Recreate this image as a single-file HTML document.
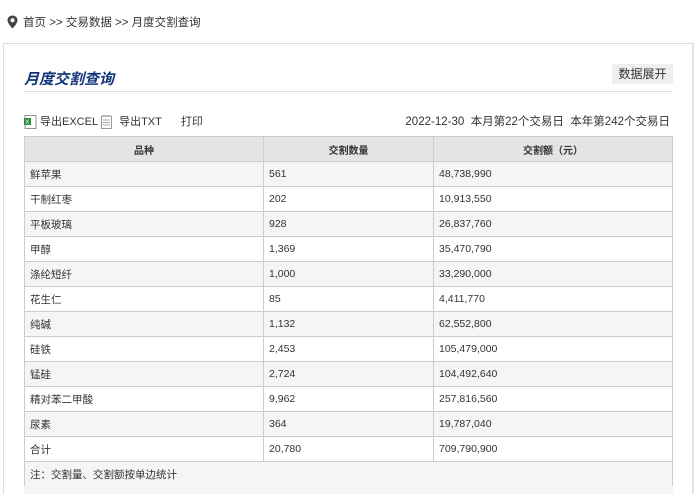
<!DOCTYPE html>
<html><head><meta charset="utf-8"><style>
*{margin:0;padding:0;box-sizing:border-box}
html,body{width:699px;height:494px;overflow:hidden}
body{background:#fff;font-family:"Liberation Sans","Noto Sans CJK SC",sans-serif;font-size:12px;color:#333;position:relative}
.crumb{position:absolute;left:7px;top:14px;font-size:11.5px;color:#333;display:flex;align-items:center}
.box{position:absolute;left:3px;top:43px;width:691px;height:460px;border:1px solid #ddd;border-right:2px solid #e2e2e2}
.title{position:absolute;left:24px;top:68px;font-size:15px;font-weight:bold;font-style:italic;color:#12357a}
.hr{position:absolute;left:24px;top:91px;width:649px;height:1px;background:#ddd}
.btn{position:absolute;left:612px;top:64px;width:61px;height:20px;background:#efefef;text-align:center;line-height:20px;color:#333}
.tools{position:absolute;left:24px;top:114px;display:flex;align-items:center;line-height:16px;font-size:11px}
.date{position:absolute;right:29px;top:114px;line-height:16px;font-size:11.5px}
table{position:absolute;left:24px;top:136px;width:649px;border-collapse:collapse}
td,th{border:1px solid #ccc;height:25px;padding:0 5px;font-size:10.5px;font-weight:normal;text-align:left}
th{background:#e4e4e4;text-align:center;font-size:10px;font-weight:bold}
tr.g td{background:#f5f5f4}
.foot{position:absolute;left:24px;top:486px;width:649px;height:8px;background:#f4f4f4}
</style></head><body>
<div class="crumb"><svg width="11" height="14" viewBox="0 0 11 14" style="margin-right:5px"><path d="M5.5 0.5C2.7 0.5 0.5 2.7 0.5 5.4 0.5 8.6 5.5 13.5 5.5 13.5S10.5 8.6 10.5 5.4C10.5 2.7 8.3 0.5 5.5 0.5Z" fill="#444"/><circle cx="5.5" cy="5.2" r="2" fill="#fff"/></svg>首页 &gt;&gt; 交易数据 &gt;&gt; 月度交割查询</div>
<div class="box"></div>
<div class="title">月度交割查询</div>
<div class="btn">数据展开</div>
<div class="hr"></div>
<div class="tools"><svg width="13" height="14" viewBox="0 0 13 14"><rect x="1" y="0.5" width="11" height="13" fill="#fff" stroke="#8a9a8a"/><rect x="0" y="3" width="7" height="7" fill="#2e8b3a"/><text x="1.2" y="9" font-size="6" fill="#fff" font-family="Liberation Sans">X</text></svg><span style="margin-left:3px">导出EXCEL</span><svg width="12" height="14" viewBox="0 0 12 14" style="margin-left:3px"><rect x="0.5" y="1.5" width="10" height="12" fill="#fff" stroke="#999"/><path d="M2 5h7M2 7.5h7M2 10h7" stroke="#aaa"/><rect x="1" y="0" width="9" height="2" fill="#bbb"/></svg><span style="margin-left:6px">导出TXT</span><span style="margin-left:19px">打印</span></div>
<div class="date">2022-12-30&nbsp; 本月第22个交易日&nbsp; 本年第242个交易日</div>
<table>
<tr><th style="width:239px">品种</th><th style="width:170px">交割数量</th><th>交割额（元）</th></tr>
<tr class="g"><td>鲜苹果</td><td>561</td><td>48,738,990</td></tr>
<tr><td>干制红枣</td><td>202</td><td>10,913,550</td></tr>
<tr class="g"><td>平板玻璃</td><td>928</td><td>26,837,760</td></tr>
<tr><td>甲醇</td><td>1,369</td><td>35,470,790</td></tr>
<tr class="g"><td>涤纶短纤</td><td>1,000</td><td>33,290,000</td></tr>
<tr><td>花生仁</td><td>85</td><td>4,411,770</td></tr>
<tr class="g"><td>纯碱</td><td>1,132</td><td>62,552,800</td></tr>
<tr><td>硅铁</td><td>2,453</td><td>105,479,000</td></tr>
<tr class="g"><td>锰硅</td><td>2,724</td><td>104,492,640</td></tr>
<tr><td>精对苯二甲酸</td><td>9,962</td><td>257,816,560</td></tr>
<tr class="g"><td>尿素</td><td>364</td><td>19,787,040</td></tr>
<tr><td>合计</td><td>20,780</td><td>709,790,900</td></tr>
<tr class="g"><td colspan="3">注：交割量、交割额按单边统计</td></tr>
</table>
<div class="foot"></div>
</body></html>
